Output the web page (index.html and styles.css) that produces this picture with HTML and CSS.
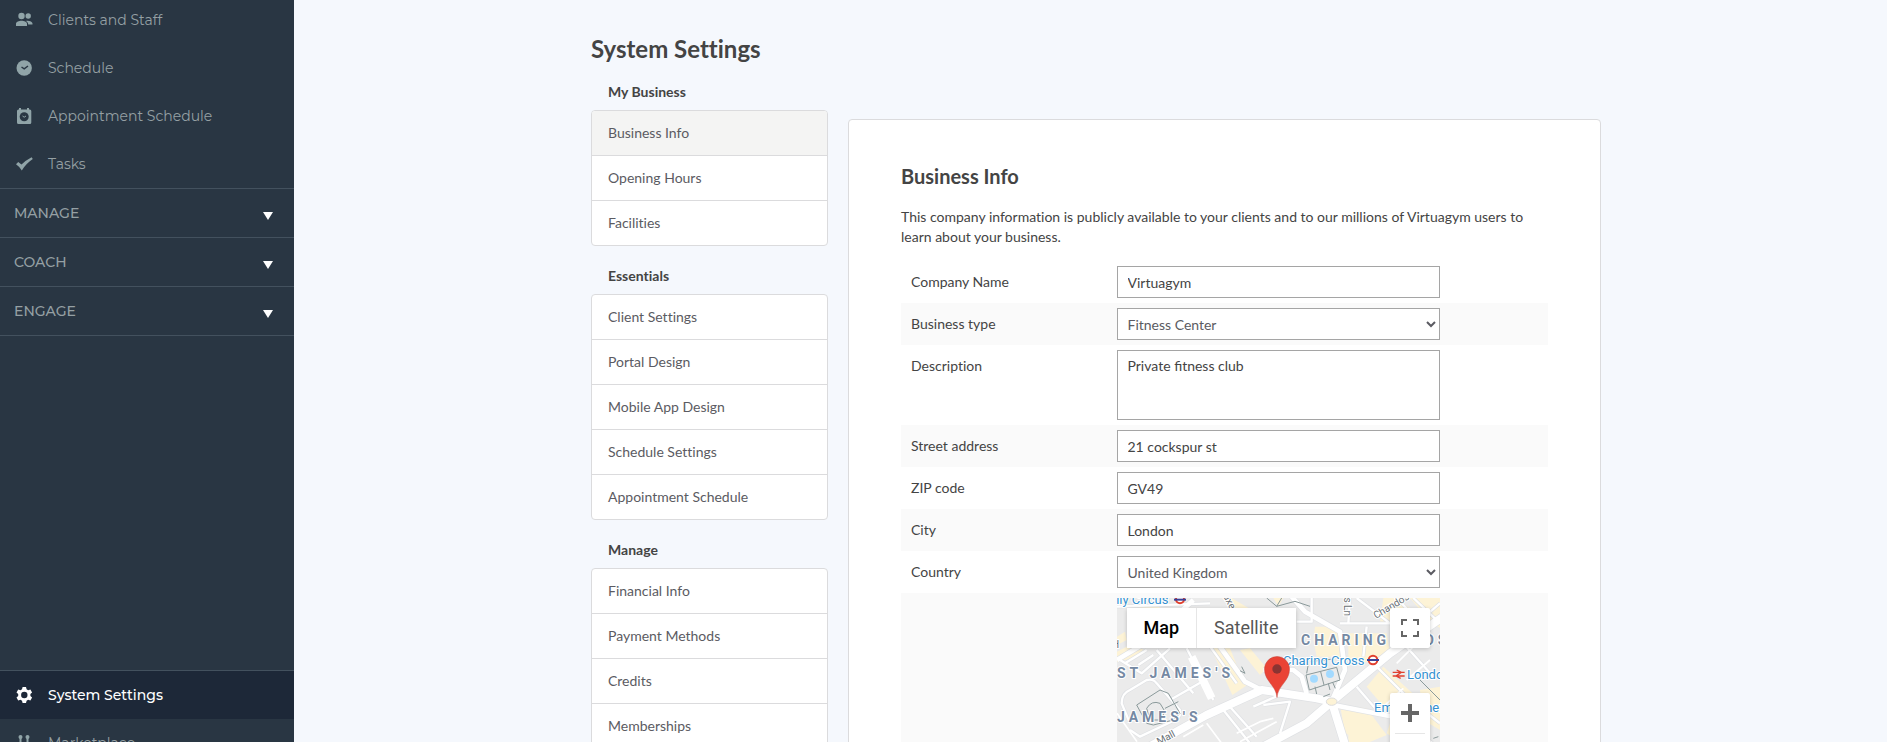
FILE: index.html
```html
<!DOCTYPE html>
<html lang="en">
<head>
    <meta charset="UTF-8">
    <meta name="viewport" content="width=device-width, initial-scale=1.0">
    <title>System Settings</title>
    <link rel="stylesheet" href="styles.css">
</head>
<body>
    <aside class="sidebar">
        <nav class="menu">
            <a class="menu-item" href="#">
                <svg class="icon" viewBox="0 0 17 16"><circle cx="5.5" cy="4" r="3.2"/><circle cx="12.2" cy="4" r="2.7"/><path d="M0 14v-2.2C0 9.800 3 8.800 5.500 8.800s5.500 1 5.500 3V14zM10 8.900c3-.5 6.500.6 6.500 2.700V12.500h-4.300c0-1.700-.8-2.800-2.200-3.600z"/></svg>
                Clients and Staff
            </a>
            <a class="menu-item" href="#">
                <svg class="icon" viewBox="0 0 17 16"><circle cx="8.200" cy="8" r="7.700"/><path class="icon-line" d="M5.500 7l2.700 1.800L12 6"/></svg>
                Schedule
            </a>
            <a class="menu-item" href="#">
                <svg class="icon" viewBox="0 0 17 16"><path d="M2.500 1.500H3V0h2v1.500h6V0h2v1.500h.8q1.500 0 1.500 1.500v11.500q0 1.500-1.500 1.500H2.500Q1 16 1 14.500V3q0-1.500 1.500-1.500z"/><circle class="icon-hole" cx="8.200" cy="8.800" r="4.500"/><path class="icon-hand" d="M6.500 8l1.700 1.200L10 8"/></svg>
                Appointment Schedule
            </a>
            <a class="menu-item" href="#">
                <svg class="icon" viewBox="0 0 17 16"><path d="M0 8.200l2.200-2.300 3.300 2.700Q10 4 15.600 1.200L16.800 3Q10 7.500 5.800 14.500 3.500 10.500 0 8.200z"/></svg>
                Tasks
            </a>
            <button class="menu-section" type="button">MANAGE <span class="caret"></span></button>
            <button class="menu-section" type="button">COACH <span class="caret"></span></button>
            <button class="menu-section" type="button">ENGAGE <span class="caret"></span></button>
        </nav>
        <nav class="menu-bottom">
            <a class="menu-item active" href="#">
                <svg class="icon" viewBox="0 0 17 16"><path fill-rule="evenodd" d="M6.600 0h3.400l.6 2.300 1.500.9 2.300-.7 1.700 2.900L14.400 7v2l1.700 1.600-1.700 2.900-2.300-.7-1.500.9-.6 2.300H6.600L6 13.700l-1.500-.9-2.300.7-1.700-2.900L2.200 9V7L.5 5.400l1.700-2.900 2.300.7L6 2.300zM8.300 4.800a3.200 3.200 0 1 0 0 6.400 3.200 3.200 0 0 0 0-6.400z"/></svg>
                System Settings
            </a>
            <a class="menu-item" href="#">
                <svg class="icon" viewBox="0 0 17 16"><circle cx="4.500" cy="2" r="2"/><circle cx="11.500" cy="2" r="2"/><path d="M3.500 3h2v4h5V3h2v5l2 3v5h-3v-4h-2v4H6.500v-4h-2v4h-3v-5l2-3z"/></svg>
                Marketplace
            </a>
        </nav>
    </aside>

    <main>
        <div class="container">
            <h1>System Settings</h1>
            <div class="columns">
                <nav class="settings-nav">
                    <h3>My Business</h3>
                    <div class="link-list">
                        <a class="selected" href="#">Business Info</a>
                        <a href="#">Opening Hours</a>
                        <a href="#">Facilities</a>
                    </div>
                    <h3>Essentials</h3>
                    <div class="link-list">
                        <a href="#">Client Settings</a>
                        <a href="#">Portal Design</a>
                        <a href="#">Mobile App Design</a>
                        <a href="#">Schedule Settings</a>
                        <a href="#">Appointment Schedule</a>
                    </div>
                    <h3>Manage</h3>
                    <div class="link-list">
                        <a href="#">Financial Info</a>
                        <a href="#">Payment Methods</a>
                        <a href="#">Credits</a>
                        <a href="#">Memberships</a>
                    </div>
                </nav>

                <section class="panel">
                    <h2>Business Info</h2>
                    <p>This company information is publicly available to your clients and to our millions of Virtuagym users to learn about your business.</p>
                    <form>
                        <div class="row">
                            <label for="company">Company Name</label>
                            <input type="text" id="company" value="Virtuagym">
                        </div>
                        <div class="row">
                            <label for="type">Business type</label>
                            <select id="type"><option>Fitness Center</option></select>
                        </div>
                        <div class="row">
                            <label for="description">Description</label>
                            <textarea id="description">Private fitness club</textarea>
                        </div>
                        <div class="row">
                            <label for="street">Street address</label>
                            <input type="text" id="street" value="21 cockspur st">
                        </div>
                        <div class="row">
                            <label for="zip">ZIP code</label>
                            <input type="text" id="zip" value="GV49">
                        </div>
                        <div class="row">
                            <label for="city">City</label>
                            <input type="text" id="city" value="London">
                        </div>
                        <div class="row">
                            <label for="country">Country</label>
                            <select id="country"><option>United Kingdom</option></select>
                        </div>
                        <div class="row">
                            <span></span>
                            <div class="map">
                                <svg class="map-streets" viewBox="21 24 969 600">
                                    <g class="shops">
                                        <path d="M60 24L21 24V50L50 45zM21 140L45 125 50 150 21 165zM21 185L70 160 100 180 70 205 21 215zM90 50h60l-30 30H60zM300 175h60l30 75-20 10zM310 190l40-10 62 105-45 30zM390 180l30-5 50 60-20 20zM335 24h30l50 30h-50zM490 24h30l-15 25zM615 110h65l10 90h-70l-10-50zM715 130h115l10 60-40 30-85-10zM820 24h40l60 45-30 40-80-10zM900 24h90v90l-30-20zM690 345l80 10 60 80-60 25-65-30zM770 290l50-60 110 100-20 40-80-10zM930 300l60-10v130l-50-30zM715 400l60 60h-60zM850 370l70 50-30 50-60-40z"/>
                                    </g>
                                    <g class="casing">
                                        <path d="M100 480L290 375 400 325 455 300 620 325 665 335M665 335L840 190 1000 80M665 335L590 400 440 480M665 335L710 480" stroke-width="28"/>
                                        <path d="M330 170L405 275 455 300M545 20L585 65 690 125 705 240 665 335M21 210L120 150 250 30M670 345L850 380 990 480M460 240L550 240 575 260 590 310" stroke-width="18"/>
                                        <path d="M230 175L310 330M180 175L95 250 30 210M140 180L250 310M250 100L380 280M21 50L300 40M690 100H860M560 95H605V24M720 24L715 100M840 100L740 24M770 110L760 200M860 24L960 130M910 24L990 100M920 100L990 40M800 230L900 330 990 400M880 160L970 260M740 290L800 360M60 400L35 340Q35 310 60 300L110 270Q130 265 140 280L210 360Q215 380 195 390L90 440 60 420M180 330L285 270M340 360L420 460M355 345L440 440M460 345L540 335 510 430M430 350L520 310M110 180L45 220M130 195L85 225" stroke-width="11"/>
                                    </g>
                                    <g class="roads">
                                        <path d="M100 480L290 375 400 325 455 300 620 325 665 335M665 335L840 190 1000 80M665 335L590 400 440 480M665 335L710 480M245 200L305 325" stroke-width="24"/>
                                        <path d="M330 170L405 275 455 300M545 20L585 65 690 125 705 240 665 335M21 210L120 150 250 30M670 345L850 380 990 480M460 240L550 240 575 260 590 310" stroke-width="14"/>
                                        <path d="M230 175L310 330M180 175L95 250 30 210M140 180L250 310M250 100L380 280M21 50L300 40M690 100H860M560 95H605V24M720 24L715 100M840 100L740 24M770 110L760 200M860 24L960 130M910 24L990 100M920 100L990 40M800 230L900 330 990 400M880 160L970 260M740 290L800 360M60 400L35 340Q35 310 60 300L110 270Q130 265 140 280L210 360Q215 380 195 390L90 440 60 420M180 330L285 270M340 360L420 460M355 345L440 440M460 345L540 335 510 430M430 350L520 310M110 180L45 220M130 195L85 225" stroke-width="7"/>
                                        <path d="M21 370l60 85M220 440l60-35M380 430l70-35 40-10M390 455l110-60M820 350l60-55M860 385l60-50M930 150l-70 70M890 270l70-60M290 400l45 60" stroke-width="5"/>
                                    </g>
                                    <ellipse class="island" cx="665" cy="335" rx="16" ry="11"/>
                                    <path class="paths" d="M80 345L150 300 175 310 210 370 190 390 130 405 110 400zM110 355q15-25 40-15l15 25-15 25h-30zM165 355l40-20M470 24l30 25 55-15 45 15M500 49l15-25M588 255L680 232 690 270 598 300zM632 245l10 40M615 290l5 22M655 280l5 20M668 277l8 18M600 215l70-8M590 250l5-28M640 320l20-8M395 230l10 20-15-8M930 270l60 60M970 445l15-5"/>
                                    <circle class="pond" cx="612" cy="266" r="12"/>
                                    <circle class="pond" cx="660" cy="252" r="12"/>
                                    <circle class="tube-ring" cx="210" cy="28" r="12"/>
                                    <path class="tube-bar" d="M192 29h36"/>
                                    <circle class="tube-ring" cx="789" cy="210" r="13"/>
                                    <path class="tube-bar" d="M771 210h36"/>
                                    <path class="rail" d="M848 247h36M848 258h36M860 240l14 7-16 11 14 7"/>
                                </svg>
                                <svg class="map-labels" viewBox="0 0 323 200">
                                    <g class="station">
                                        <text x="-4" y="6">illy Circus</text>
                                        <text x="166" y="67">Charing Cross</text>
                                        <text x="290" y="81">London</text>
                                        <text x="257" y="114">Embankment</text>
                                    </g>
                                    <g class="area">
                                        <text x="184" y="47">CHARING</text>
                                        <text x="281" y="47">CROSS</text>
                                        <text x="0" y="80">ST JAMES'S</text>
                                        <text x="0" y="124">JAMES'S</text>
                                    </g>
                                    <g class="street">
                                        <text transform="translate(259 21) rotate(-31)">Chandos</text>
                                        <text transform="translate(227 -3) rotate(90)">is Ln</text>
                                        <text transform="translate(106 -2) rotate(62)">uxe</text>
                                        <text transform="translate(42 147) rotate(-28)">Mall</text>
                                        <text x="-5" y="50">H</text>
                                    </g>
                                </svg>
                                <svg class="pin" viewBox="0 0 26 42"><path fill="#ea4335" stroke="#c5453a" stroke-width=".5" d="M13 41.500C12 29 .5 25.500.5 13a12.500 12.500 0 0 1 25 0C25.500 25.500 14 29 13 41.500z"/><circle fill="#8b3432" cx="13" cy="13" r="4.700"/></svg>
                                <div class="map-type">
                                    <button class="current" type="button">Map</button>
                                    <button type="button">Satellite</button>
                                </div>
                                <button class="map-button fullscreen" type="button" aria-label="Fullscreen">
                                    <svg viewBox="0 0 18 18"><path d="M0 0h6v2H2v4H0zM12 0h6v6h-2V2h-4zM0 12h2v4h4v2H0zM16 12h2v6h-6v-2h4z"/></svg>
                                </button>
                                <div class="zoom-buttons">
                                    <button class="map-button" type="button" aria-label="Zoom in">
                                        <svg viewBox="0 0 18 18"><path d="M7 0h4v7h7v4h-7v7H7v-7H0V7h7z"/></svg>
                                    </button>
                                    <button class="map-button" type="button" aria-label="Zoom out">
                                        <svg viewBox="0 0 18 18"><path d="M0 7h18v4H0z"/></svg>
                                    </button>
                                </div>
                            </div>
                        </div>
                    </form>
                </section>
            </div>
        </div>
    </main>
</body>
</html>
```

FILE: styles.css
```css
* {
    box-sizing: border-box;
}

body {
    margin: 0;
    display: flex;
    height: 100vh;
    overflow: hidden;
    font-family: Lato, sans-serif;
    font-size: 14px;
    line-height: 20px;
    font-variant-ligatures: no-common-ligatures;
    color: #444444;
    background-color: #f5f8fd;
}

a {
    text-decoration: none;
    color: inherit;
}

button {
    font: inherit;
    border: 0;
    margin: 0;
    padding: 0;
    cursor: pointer;
}

/* sidebar */
.sidebar {
    width: 294px;
    flex-shrink: 0;
    display: flex;
    flex-direction: column;
    justify-content: space-between;
    background-color: #293643;
    color: #95a0a4;
    font-family: Montserrat, Inter, sans-serif;
}

.menu {
    margin-top: -4px;
    border-bottom: 1px solid #43515e;
}

.menu-item {
    display: flex;
    align-items: center;
    gap: 15px;
    height: 48px;
    padding-left: 16px;
}

.menu-item.active {
    background-color: #1d2838;
    color: #ffffff;
    font-weight: 500;
}

.icon {
    width: 17px;
    height: 16px;
    fill: #90a4a8;
}

.active .icon {
    fill: #ffffff;
}

.icon-line {
    fill: none;
    stroke: #293643;
    stroke-width: 1.5;
}

.icon-hole {
    fill: #293643;
}

.icon-hand {
    fill: none;
    stroke: #90a4a8;
}

.menu-section {
    display: flex;
    align-items: center;
    justify-content: space-between;
    width: 100%;
    height: 49px;
    padding: 0 21px 0 14px;
    border-top: 1px solid #43515e;
    background: none;
    color: #95a0a4;
    font-weight: 500;
}

.caret {
    margin-top: 5px;
    border: 5px solid transparent;
    border-top: 8px solid #ffffff;
    border-bottom: 0;
}

.menu-bottom {
    height: 72px;
    overflow: hidden;
    border-top: 1px solid #43515e;
}

/* content */
main {
    flex: 1;
    padding: 34px 0 0 11px;
}

.container {
    max-width: 1010px;
    margin: 0 auto;
}

h1 {
    margin: 0;
    font-size: 24px;
    line-height: 30px;
}

h2 {
    margin: 0;
    font-size: 20px;
    line-height: 30px;
}

h3 {
    margin: 20px 0 8px 17px;
    font-size: 14px;
    line-height: 20px;
}

.columns {
    display: flex;
    align-items: flex-start;
    gap: 20px;
    padding-top: 18px;
}

.settings-nav {
    width: 237px;
    flex-shrink: 0;
}

.settings-nav h3:first-child {
    margin-top: 0;
}

.link-list {
    border: 1px solid #dbdbdd;
    border-radius: 4px;
    background-color: #ffffff;
    overflow: hidden;
}

.link-list a {
    display: block;
    padding: 12px 16px;
    color: #5b5b62;
}

.link-list a + a {
    border-top: 1px solid #dbdbdd;
}

.link-list .selected {
    background-color: #f4f4f3;
}

.panel {
    flex: 1;
    margin-top: 37px;
    padding: 41px 52px;
    border: 1px solid #dbdbdd;
    border-radius: 4px;
    background-color: #ffffff;
}

.panel p {
    margin: 16px 0 14px;
}

/* form */
.row {
    display: flex;
    align-items: flex-start;
    padding: 5px 0;
}

.row:nth-child(even) {
    background-color: #fafafa;
}

.row > :first-child {
    flex: 1;
    padding: 6px 10px;
}

.row > :last-child {
    width: 50%;
    margin-right: 108px;
}

input,
select,
textarea {
    height: 32px;
    margin: 0;
    padding: 5px 10px;
    border: 1px solid #a5a5a5;
    border-radius: 0;
    background-color: #ffffff;
    color: #444444;
    font: inherit;
}

select {
    padding: 0 6px;
    color: #5b5b62;
}

textarea {
    height: 70px;
    resize: none;
    font-variant-ligatures: normal;
}

/* map */
.map {
    position: relative;
    height: 200px;
    overflow: hidden;
    background-color: #ebebeb;
    font-family: Roboto, sans-serif;
}

.map-streets,
.map-labels {
    position: absolute;
    top: 0;
    left: 0;
    width: 323px;
    height: 200px;
}

.shops {
    fill: #fdf3d6;
}

.casing,
.roads {
    fill: none;
    stroke-linejoin: round;
}

.casing {
    stroke: #dfe1e4;
}

.roads {
    stroke: #ffffff;
}

.island {
    fill: #fdf3d6;
    stroke: #dcdcdc;
    stroke-width: 3;
}

.paths {
    fill: none;
    stroke: #8b9a9b;
    stroke-width: 3;
}

.pond {
    fill: #a3daff;
}

.tube-ring {
    fill: #ffffff;
    stroke: #e1402e;
    stroke-width: 6;
}

.tube-bar {
    stroke: #3c3f94;
    stroke-width: 6;
}

.rail {
    fill: none;
    stroke: #e1402e;
    stroke-width: 4;
}

.map-labels text {
    paint-order: stroke;
    stroke: #ffffff;
    stroke-width: 2px;
}

.station {
    fill: #3591d1;
    font-size: 13px;
}

.area {
    fill: #7589a3;
    font-size: 14px;
    font-weight: 700;
    letter-spacing: 4px;
}

.street {
    fill: #6a7176;
    font-size: 10px;
}

.pin {
    position: absolute;
    top: 58px;
    left: 147px;
    width: 26px;
    height: 42px;
}

.map-type {
    position: absolute;
    top: 10px;
    left: 10px;
    display: flex;
    border-radius: 2px;
    box-shadow: 0 1px 4px rgba(0, 0, 0, 0.2);
}

.map-type button {
    height: 40px;
    padding: 0 17px;
    background-color: #ffffff;
    color: #565656;
    font-size: 18px;
}

.map-type .current {
    border-right: 1px solid #e6e6e6;
    color: #000000;
    font-weight: 500;
}

.map-button {
    display: flex;
    align-items: center;
    justify-content: center;
    width: 40px;
    height: 40px;
    background: none;
}

.map-button svg {
    width: 18px;
    height: 18px;
    fill: #666666;
}

.fullscreen {
    position: absolute;
    top: 10px;
    right: 10px;
    border-radius: 2px;
    background-color: #ffffff;
    box-shadow: 0 1px 4px rgba(0, 0, 0, 0.2);
}

.zoom-buttons {
    position: absolute;
    top: 95px;
    right: 10px;
    display: flex;
    flex-direction: column;
    gap: 1px;
    border-radius: 2px;
    background: linear-gradient(#e6e6e6, #e6e6e6) center / 30px 1px no-repeat #ffffff;
    box-shadow: 0 1px 4px rgba(0, 0, 0, 0.2);
}
```
